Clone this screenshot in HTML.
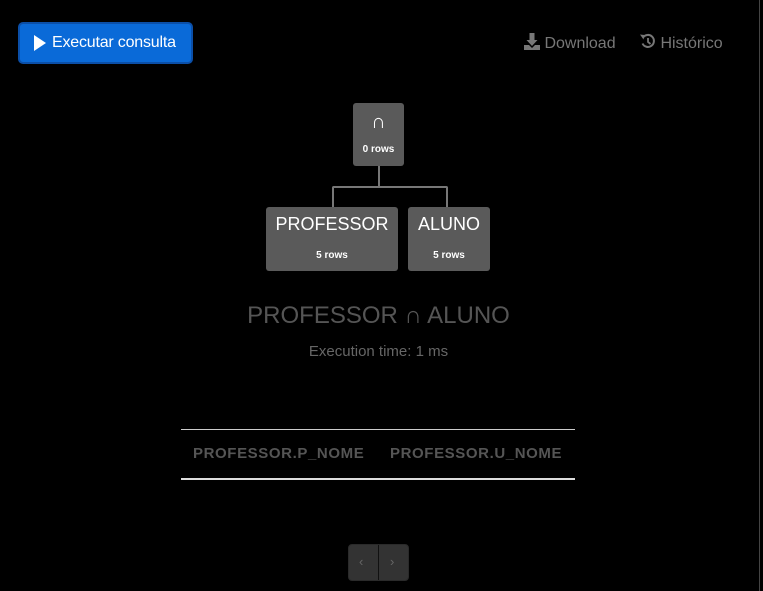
<!DOCTYPE html>
<html><head><meta charset="utf-8"><style>
*{margin:0;padding:0;box-sizing:border-box}
body{width:763px;height:591px;background:#000;font-family:"Liberation Sans",sans-serif;position:relative;overflow:hidden}
.abs{position:absolute}
.btn{left:18px;top:22px;width:175px;height:42px;background:#0a6ad8;border:2px solid #0b4fa8;border-radius:5px;color:#fff;font-size:16px;line-height:38px;padding-left:32px;letter-spacing:-0.2px}
.node{background:#5a5a5a;border-radius:3px;color:#fff;text-align:center}
.big{font-size:18px}
.small{font-size:10px;font-weight:bold}
.line{background:#777}
</style></head><body>
<div class="abs" style="left:759px;top:0;width:1px;height:591px;background:#444"></div>
<div class="abs btn"><svg class="abs" style="left:13px;top:10px" width="14" height="18" viewBox="0 0 14 18"><path d="M1 1L13 9L1 17Z" fill="#fff"/></svg>Executar consulta</div>
<div class="abs" style="left:524px;top:33px;color:#777;font-size:16px"><svg style="vertical-align:-2px" width="16" height="17" viewBox="0 0 16 17"><path d="M5.5 0h5v7h3l-5.5 6L2.5 7h3z M0 12h5l3 3 3-3h5v5H0z" fill="#777"/></svg> Download</div>
<div class="abs" style="left:640px;top:33px;color:#777;font-size:16px"><svg style="vertical-align:-2px" width="16" height="17" viewBox="0 0 16 16"><path d="M3 4A6 6 0 1 1 2.5 10" stroke="#777" stroke-width="2" fill="none"/><path d="M0 1l4.5 0.5-1 4.5z" fill="#777"/><path d="M8 4.5V8.5l2.5 2" stroke="#777" stroke-width="1.8" fill="none"/></svg> Histórico</div>

<div class="abs node" style="left:353px;top:103px;width:51px;height:63px"><div style="font-size:20px;margin-top:8px;line-height:22px">∩</div><div class="small" style="margin-top:11px">0 rows</div></div>
<div class="abs line" style="left:378px;top:166px;width:2px;height:21px"></div>
<div class="abs" style="left:332px;top:186px;width:116px;height:21px;border:2px solid #777;border-bottom:none;border-radius:2px 2px 0 0"></div>
<div class="abs node" style="left:266px;top:207px;width:132px;height:64px"><div class="big" style="margin-top:7px">PROFESSOR</div><div class="small" style="margin-top:15px">5 rows</div></div>
<div class="abs node" style="left:408px;top:207px;width:82px;height:64px"><div class="big" style="margin-top:7px">ALUNO</div><div class="small" style="margin-top:15px">5 rows</div></div>

<div class="abs" style="left:0;width:757px;top:302px;text-align:center;color:#555;font-size:24px">PROFESSOR ∩ ALUNO</div>
<div class="abs" style="left:0;width:757px;top:343px;text-align:center;color:#666;font-size:15px">Execution time: 1 ms</div>

<div class="abs" style="left:181px;top:429px;width:394px;height:1px;background:#ccc"></div>
<div class="abs" style="left:193px;top:445px;color:#555;font-size:15px;font-weight:bold;letter-spacing:0.6px">PROFESSOR.P_NOME</div>
<div class="abs" style="left:390px;top:445px;color:#555;font-size:15px;font-weight:bold;letter-spacing:0.6px">PROFESSOR.U_NOME</div>
<div class="abs" style="left:181px;top:478px;width:394px;height:2px;background:#ddd"></div>

<div class="abs" style="left:348px;top:544px;width:61px;height:37px;background:#333;border:1px solid #2a2a2a;border-radius:4px"></div>
<div class="abs" style="left:378px;top:545px;width:1px;height:35px;background:#111"></div>
<div class="abs" style="left:359px;top:554px;color:#666;font-size:13px">‹</div>
<div class="abs" style="left:390px;top:554px;color:#666;font-size:13px">›</div>
</body></html>
